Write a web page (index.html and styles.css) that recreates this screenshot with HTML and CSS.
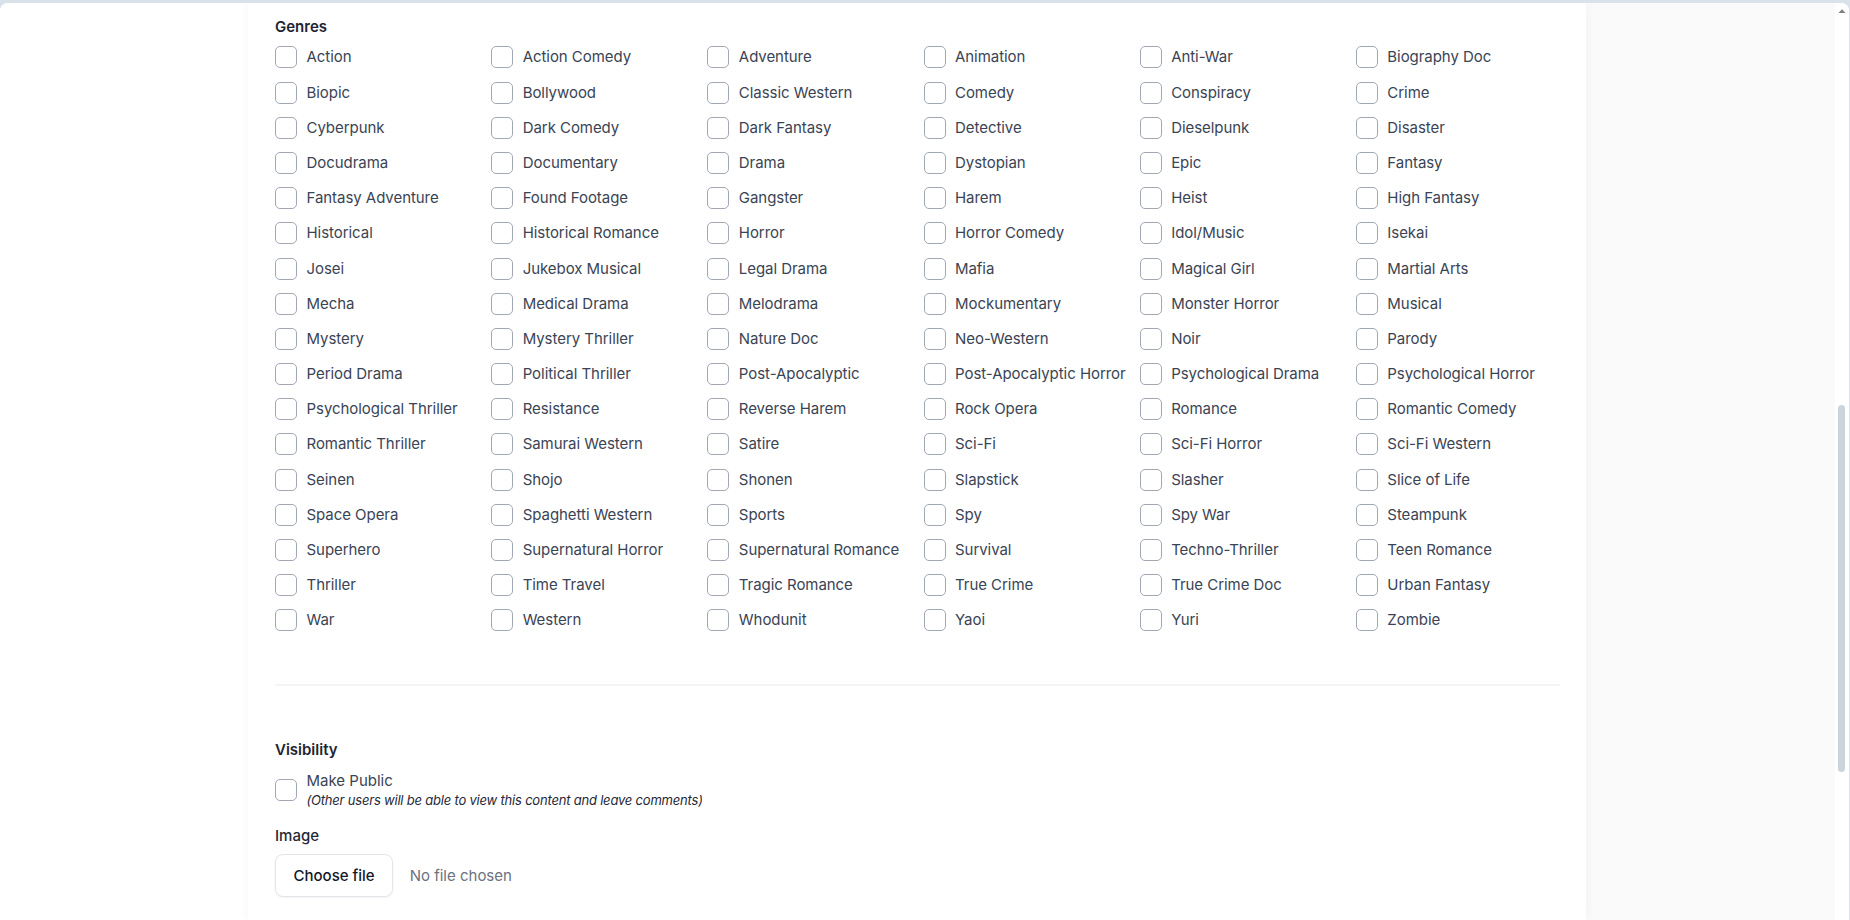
FILE: index.html
```html
<!DOCTYPE html>
<html lang="en">
<head>
<meta charset="utf-8">
<title>Genres</title>
<link rel="stylesheet" href="styles.css">
</head>
<body>
<div class="frame">
  <div class="gutter-left"></div>
  <main class="panel">
    <section class="field">
      <div class="field-title">Genres</div>
      <div class="genre-grid">
        <label class="opt"><input type="checkbox"><span>Action</span></label>
        <label class="opt"><input type="checkbox"><span>Action Comedy</span></label>
        <label class="opt"><input type="checkbox"><span>Adventure</span></label>
        <label class="opt"><input type="checkbox"><span>Animation</span></label>
        <label class="opt"><input type="checkbox"><span>Anti-War</span></label>
        <label class="opt"><input type="checkbox"><span>Biography Doc</span></label>
        <label class="opt"><input type="checkbox"><span>Biopic</span></label>
        <label class="opt"><input type="checkbox"><span>Bollywood</span></label>
        <label class="opt"><input type="checkbox"><span>Classic Western</span></label>
        <label class="opt"><input type="checkbox"><span>Comedy</span></label>
        <label class="opt"><input type="checkbox"><span>Conspiracy</span></label>
        <label class="opt"><input type="checkbox"><span>Crime</span></label>
        <label class="opt"><input type="checkbox"><span>Cyberpunk</span></label>
        <label class="opt"><input type="checkbox"><span>Dark Comedy</span></label>
        <label class="opt"><input type="checkbox"><span>Dark Fantasy</span></label>
        <label class="opt"><input type="checkbox"><span>Detective</span></label>
        <label class="opt"><input type="checkbox"><span>Dieselpunk</span></label>
        <label class="opt"><input type="checkbox"><span>Disaster</span></label>
        <label class="opt"><input type="checkbox"><span>Docudrama</span></label>
        <label class="opt"><input type="checkbox"><span>Documentary</span></label>
        <label class="opt"><input type="checkbox"><span>Drama</span></label>
        <label class="opt"><input type="checkbox"><span>Dystopian</span></label>
        <label class="opt"><input type="checkbox"><span>Epic</span></label>
        <label class="opt"><input type="checkbox"><span>Fantasy</span></label>
        <label class="opt"><input type="checkbox"><span>Fantasy Adventure</span></label>
        <label class="opt"><input type="checkbox"><span>Found Footage</span></label>
        <label class="opt"><input type="checkbox"><span>Gangster</span></label>
        <label class="opt"><input type="checkbox"><span>Harem</span></label>
        <label class="opt"><input type="checkbox"><span>Heist</span></label>
        <label class="opt"><input type="checkbox"><span>High Fantasy</span></label>
        <label class="opt"><input type="checkbox"><span>Historical</span></label>
        <label class="opt"><input type="checkbox"><span>Historical Romance</span></label>
        <label class="opt"><input type="checkbox"><span>Horror</span></label>
        <label class="opt"><input type="checkbox"><span>Horror Comedy</span></label>
        <label class="opt"><input type="checkbox"><span>Idol/Music</span></label>
        <label class="opt"><input type="checkbox"><span>Isekai</span></label>
        <label class="opt"><input type="checkbox"><span>Josei</span></label>
        <label class="opt"><input type="checkbox"><span>Jukebox Musical</span></label>
        <label class="opt"><input type="checkbox"><span>Legal Drama</span></label>
        <label class="opt"><input type="checkbox"><span>Mafia</span></label>
        <label class="opt"><input type="checkbox"><span>Magical Girl</span></label>
        <label class="opt"><input type="checkbox"><span>Martial Arts</span></label>
        <label class="opt"><input type="checkbox"><span>Mecha</span></label>
        <label class="opt"><input type="checkbox"><span>Medical Drama</span></label>
        <label class="opt"><input type="checkbox"><span>Melodrama</span></label>
        <label class="opt"><input type="checkbox"><span>Mockumentary</span></label>
        <label class="opt"><input type="checkbox"><span>Monster Horror</span></label>
        <label class="opt"><input type="checkbox"><span>Musical</span></label>
        <label class="opt"><input type="checkbox"><span>Mystery</span></label>
        <label class="opt"><input type="checkbox"><span>Mystery Thriller</span></label>
        <label class="opt"><input type="checkbox"><span>Nature Doc</span></label>
        <label class="opt"><input type="checkbox"><span>Neo-Western</span></label>
        <label class="opt"><input type="checkbox"><span>Noir</span></label>
        <label class="opt"><input type="checkbox"><span>Parody</span></label>
        <label class="opt"><input type="checkbox"><span>Period Drama</span></label>
        <label class="opt"><input type="checkbox"><span>Political Thriller</span></label>
        <label class="opt"><input type="checkbox"><span>Post-Apocalyptic</span></label>
        <label class="opt"><input type="checkbox"><span>Post-Apocalyptic Horror</span></label>
        <label class="opt"><input type="checkbox"><span>Psychological Drama</span></label>
        <label class="opt"><input type="checkbox"><span>Psychological Horror</span></label>
        <label class="opt"><input type="checkbox"><span>Psychological Thriller</span></label>
        <label class="opt"><input type="checkbox"><span>Resistance</span></label>
        <label class="opt"><input type="checkbox"><span>Reverse Harem</span></label>
        <label class="opt"><input type="checkbox"><span>Rock Opera</span></label>
        <label class="opt"><input type="checkbox"><span>Romance</span></label>
        <label class="opt"><input type="checkbox"><span>Romantic Comedy</span></label>
        <label class="opt"><input type="checkbox"><span>Romantic Thriller</span></label>
        <label class="opt"><input type="checkbox"><span>Samurai Western</span></label>
        <label class="opt"><input type="checkbox"><span>Satire</span></label>
        <label class="opt"><input type="checkbox"><span>Sci-Fi</span></label>
        <label class="opt"><input type="checkbox"><span>Sci-Fi Horror</span></label>
        <label class="opt"><input type="checkbox"><span>Sci-Fi Western</span></label>
        <label class="opt"><input type="checkbox"><span>Seinen</span></label>
        <label class="opt"><input type="checkbox"><span>Shojo</span></label>
        <label class="opt"><input type="checkbox"><span>Shonen</span></label>
        <label class="opt"><input type="checkbox"><span>Slapstick</span></label>
        <label class="opt"><input type="checkbox"><span>Slasher</span></label>
        <label class="opt"><input type="checkbox"><span>Slice of Life</span></label>
        <label class="opt"><input type="checkbox"><span>Space Opera</span></label>
        <label class="opt"><input type="checkbox"><span>Spaghetti Western</span></label>
        <label class="opt"><input type="checkbox"><span>Sports</span></label>
        <label class="opt"><input type="checkbox"><span>Spy</span></label>
        <label class="opt"><input type="checkbox"><span>Spy War</span></label>
        <label class="opt"><input type="checkbox"><span>Steampunk</span></label>
        <label class="opt"><input type="checkbox"><span>Superhero</span></label>
        <label class="opt"><input type="checkbox"><span>Supernatural Horror</span></label>
        <label class="opt"><input type="checkbox"><span>Supernatural Romance</span></label>
        <label class="opt"><input type="checkbox"><span>Survival</span></label>
        <label class="opt"><input type="checkbox"><span>Techno-Thriller</span></label>
        <label class="opt"><input type="checkbox"><span>Teen Romance</span></label>
        <label class="opt"><input type="checkbox"><span>Thriller</span></label>
        <label class="opt"><input type="checkbox"><span>Time Travel</span></label>
        <label class="opt"><input type="checkbox"><span>Tragic Romance</span></label>
        <label class="opt"><input type="checkbox"><span>True Crime</span></label>
        <label class="opt"><input type="checkbox"><span>True Crime Doc</span></label>
        <label class="opt"><input type="checkbox"><span>Urban Fantasy</span></label>
        <label class="opt"><input type="checkbox"><span>War</span></label>
        <label class="opt"><input type="checkbox"><span>Western</span></label>
        <label class="opt"><input type="checkbox"><span>Whodunit</span></label>
        <label class="opt"><input type="checkbox"><span>Yaoi</span></label>
        <label class="opt"><input type="checkbox"><span>Yuri</span></label>
        <label class="opt"><input type="checkbox"><span>Zombie</span></label>
      </div>
    </section>

    <hr class="divider">

    <section class="field">
      <div class="field-title">Visibility</div>
      <label class="public">
        <input type="checkbox">
        <span class="public-text">
          <span class="public-main">Make Public</span>
          <span class="public-note">(Other users will be able to view this content and leave comments)</span>
        </span>
      </label>
    </section>

    <section class="field image-field">
      <div class="image-title">Image</div>
      <div class="file-row">
        <button class="file-btn" type="button">Choose file</button>
        <span class="file-status">No file chosen</span>
      </div>
    </section>
  </main>
  <div class="gutter-right"></div>

  <div class="scrollbar">
    <svg class="scroll-up" width="8" height="6" viewBox="0 0 8 6"><path d="M0.5 5 L4 1.2 L7.5 5 Z" fill="#7b7f85"/></svg>
    <div class="scroll-thumb"></div>
  </div>
</div>
</body>
</html>
```

FILE: styles.css
```css
* { box-sizing: border-box; }

html, body {
  margin: 0;
  padding: 0;
  height: 100%;
  overflow: hidden;
}

body {
  background: #d9e2ea;
  font-family: Inter, "Noto Sans", "Liberation Sans", sans-serif;
  color: #374151;
}

.frame {
  position: relative;
  display: flex;
  margin: 3px 1px 0 0;
  height: 917px;
  border-radius: 8px 8px 0 0;
  overflow: hidden;
  background: #fafafa;
}

.gutter-left {
  width: 248px;
  flex: 0 0 248px;
  background: #ffffff;
}

.gutter-right {
  flex: 1 1 auto;
  background: #fafafa;
}

.panel {
  width: 1338px;
  flex: 0 0 1338px;
  background: #ffffff;
  box-shadow: 0 0 10px rgba(0, 0, 0, 0.045);
  padding: 13.8px 26px 0 27px;
  position: relative;
  z-index: 1;
}

.field-title {
  font-size: 15px;
  line-height: 20px;
  font-weight: 600;
  color: #1e2532;
}

.genre-grid {
  margin-top: 9.6px;
  display: grid;
  grid-template-columns: repeat(6, 1fr);
  column-gap: 12px;
  row-gap: 13.2px;
}

.opt {
  display: flex;
  align-items: center;
  height: 22px;
  gap: 9.5px;
  white-space: nowrap;
  font-size: 15px;
  line-height: 22px;
  color: #3a4454;
  letter-spacing: -0.05px;
}

input[type="checkbox"] {
  appearance: none;
  -webkit-appearance: none;
  margin: 0;
  width: 22px;
  height: 22px;
  flex: 0 0 22px;
  border: 1.5px solid #a2a8b3;
  border-radius: 5px;
  background: #ffffff;
}

.divider {
  border: 0;
  height: 2px;
  background: #f3f4f6;
  margin: 52.4px 0 0 0;
}

.divider + .field {
  margin-top: 54px;
}

.public {
  display: flex;
  align-items: center;
  gap: 9.5px;
  margin-top: 11.5px;
}

.public-text {
  display: flex;
  flex-direction: column;
}

.public-main {
  font-size: 15px;
  line-height: 20px;
  color: #3a4454;
}

.public-note {
  font-size: 13px;
  line-height: 18px;
  font-style: italic;
  color: #1f2937;
  letter-spacing: -0.2px;
}

.image-field {
  margin-top: 17px;
}

.image-title {
  font-size: 15px;
  line-height: 20px;
  font-weight: 500;
  color: #1f2937;
}

.file-row {
  display: flex;
  align-items: center;
  gap: 16.5px;
  margin-top: 8px;
}

.file-btn {
  height: 43px;
  padding: 0 17.5px;
  border: 1px solid #e3e5e9;
  border-radius: 8px;
  background: #ffffff;
  box-shadow: 0 1px 2px rgba(0, 0, 0, 0.05);
  font-family: inherit;
  font-size: 15px;
  font-weight: 500;
  color: #111827;
}

.file-status {
  font-size: 15px;
  color: #6b7280;
}

.scrollbar {
  position: absolute;
  top: 0;
  right: 0;
  width: 14px;
  height: 100%;
  background: #ffffff;
  z-index: 2;
}

.scroll-up {
  position: absolute;
  top: 5px;
  left: 3px;
}

.scroll-thumb {
  position: absolute;
  top: 402px;
  left: 3px;
  width: 7px;
  height: 367px;
  border-radius: 4px;
  background: #cbd4db;
}
```
